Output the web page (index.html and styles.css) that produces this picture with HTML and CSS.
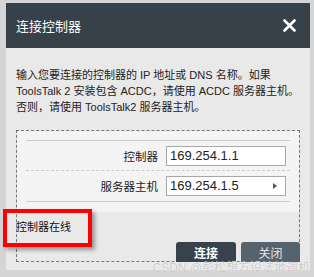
FILE: index.html
```html
<!DOCTYPE html>
<html>
<head>
    <title>连接控制器</title>
    <link rel="stylesheet" href="styles.css">
</head>
<body>
    <div class="dialog">
        <div class="dialog-header">
            <span class="dialog-title">连接控制器</span>
            <svg class="close-icon" width="13" height="13" viewBox="0 0 13 13">
                <path d="M1.5 1.5 L11.5 11.5 M11.5 1.5 L1.5 11.5" stroke="#ffffff" stroke-width="2.6" stroke-linecap="round"/>
            </svg>
        </div>

        <div class="dialog-body">
            <p class="intro">输入您要连接的控制器的 IP 地址或 DNS 名称。如果 ToolsTalk 2 安装包含 ACDC，请使用 ACDC 服务器主机。否则，请使用 ToolsTalk2 服务器主机。</p>

            <div class="focus-box">
                <div class="panel">
                    <div class="rows">
                        <div class="row row-first">
                            <label class="row-label">控制器</label>
                            <div class="field">169.254.1.1</div>
                        </div>
                        <div class="row">
                            <label class="row-label">服务器主机</label>
                            <div class="field">
                                <span>169.254.1.5</span>
                                <span class="arrow"></span>
                            </div>
                        </div>
                    </div>
                </div>

                <div class="footer">
                    <div class="status">控制器在线</div>
                    <div class="buttons">
                        <button class="btn btn-connect">连接</button>
                        <button class="btn btn-close">关闭</button>
                    </div>
                </div>
            </div>
        </div>
    </div>

    <div class="highlight"></div>
    <div class="watermark">CSDN @彭松想方设法地调机</div>
</body>
</html>
```

FILE: styles.css
```css
body {
    margin: 0;
    width: 314px;
    height: 277px;
    background-color: #d5d5d5;
    font-family: "Liberation Sans", "Noto Sans CJK SC", sans-serif;
    position: relative;
    overflow: hidden;
}

.dialog {
    margin: 3px 0 0 6px;
    width: 304px;
    height: 267px;
    background-color: #e9e9e9;
}

.dialog-header {
    height: 45px;
    background-color: #37414a;
    display: flex;
    align-items: center;
    justify-content: space-between;
    padding: 0 14px 0 10px;
    box-sizing: border-box;
}

.dialog-title {
    color: #ffffff;
    font-size: 13px;
}

.close-icon {
    display: block;
}

.dialog-body {
    padding: 19px 10px 0 10px;
}

.intro {
    margin: 0 0 15px 0;
    font-size: 11px;
    line-height: 16px;
    color: #222222;
}

.focus-box {
    border: 1px dashed #777777;
    height: 132px;
    box-sizing: border-box;
}

.panel {
    background-color: #f4f4f4;
    padding: 9px 9px 10px 9px;
}

.rows {
    border-top: 1px solid #cccccc;
    border-bottom: 1px solid #cccccc;
}

.row {
    height: 30px;
    display: flex;
    align-items: center;
}

.row-first {
    height: 29px;
    border-bottom: 1px dashed #cccccc;
}

.row-label {
    width: 132px;
    text-align: right;
    font-size: 11.5px;
    color: #222222;
}

.field {
    margin-left: 8px;
    width: 120px;
    height: 20px;
    box-sizing: border-box;
    border: 1px solid #a8a8a8;
    background-color: #ffffff;
    font-size: 13px;
    line-height: 18px;
    padding: 0 8px 0 3px;
    color: #222222;
    display: flex;
    align-items: center;
    justify-content: space-between;
}

.arrow {
    width: 0;
    height: 0;
    border-top: 3px solid transparent;
    border-bottom: 3px solid transparent;
    border-left: 4px solid #555555;
}

.footer {
    padding-top: 8px;
}

.status {
    margin-left: -1px;
    font-size: 11px;
    line-height: 14px;
    color: #111111;
}

.buttons {
    margin: 8px -1px 0 0;
    display: flex;
    justify-content: flex-end;
    gap: 5px;
}

.btn {
    height: 20px;
    border: none;
    border-radius: 3px 3px 0 0;
    font-family: "Liberation Sans", "Noto Sans CJK SC", sans-serif;
    font-size: 12px;
    padding: 0;
}

.btn-connect {
    width: 60px;
    background-color: #37424c;
    color: #ffffff;
    font-weight: bold;
}

.btn-close {
    width: 59px;
    background-color: #56626e;
    color: #e4e4e4;
}

/* annotation drawn over the screenshot */
.highlight {
    position: absolute;
    left: 3px;
    top: 209px;
    width: 81px;
    height: 30px;
    border: 4px solid #ff0000;
    box-shadow: 3px 3px 4px rgba(0, 0, 0, 0.35);
}

.watermark {
    position: absolute;
    right: 4px;
    top: 262px;
    font-size: 12px;
    line-height: 13px;
    color: rgba(190, 190, 190, 0.8);
    text-shadow: 0 0 1px #ffffff;
}
```
